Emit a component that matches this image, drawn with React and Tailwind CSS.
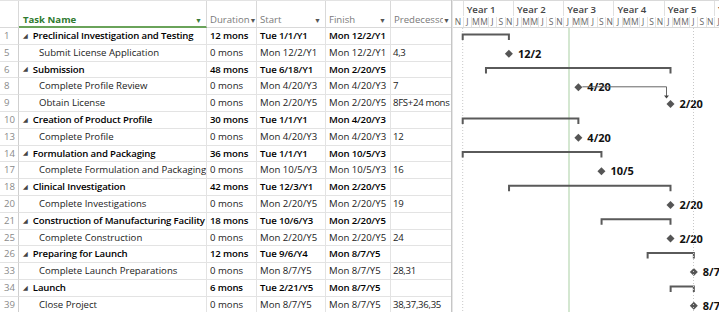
const rows = [
  { id: 1, name: "Preclinical Investigation and Testing", dur: "12 mons", start: "Tue 1/1/Y1", finish: "Mon 12/2/Y1", pred: "", sum: true, from: [1, 1, 1], to: [1, 12, 2] },
  { id: 5, name: "Submit License Application", dur: "0 mons", start: "Mon 12/2/Y1", finish: "Mon 12/2/Y1", pred: "4,3", at: [1, 12, 2], label: "12/2" },
  { id: 6, name: "Submission", dur: "48 mons", start: "Tue 6/18/Y1", finish: "Mon 2/20/Y5", pred: "", sum: true, from: [1, 6, 18], to: [5, 2, 20] },
  { id: 8, name: "Complete Profile Review", dur: "0 mons", start: "Mon 4/20/Y3", finish: "Mon 4/20/Y3", pred: "7", at: [3, 4, 20], label: "4/20" },
  { id: 9, name: "Obtain License", dur: "0 mons", start: "Mon 2/20/Y5", finish: "Mon 2/20/Y5", pred: "8FS+24 mons", at: [5, 2, 20], label: "2/20" },
  { id: 10, name: "Creation of Product Profile", dur: "30 mons", start: "Tue 1/1/Y1", finish: "Mon 4/20/Y3", pred: "", sum: true, from: [1, 1, 1], to: [3, 4, 20] },
  { id: 13, name: "Complete Profile", dur: "0 mons", start: "Mon 4/20/Y3", finish: "Mon 4/20/Y3", pred: "12", at: [3, 4, 20], label: "4/20" },
  { id: 14, name: "Formulation and Packaging", dur: "36 mons", start: "Tue 1/1/Y1", finish: "Mon 10/5/Y3", pred: "", sum: true, from: [1, 1, 1], to: [3, 10, 5] },
  { id: 17, name: "Complete Formulation and Packaging", dur: "0 mons", start: "Mon 10/5/Y3", finish: "Mon 10/5/Y3", pred: "16", at: [3, 10, 5], label: "10/5" },
  { id: 18, name: "Clinical Investigation", dur: "42 mons", start: "Tue 12/3/Y1", finish: "Mon 2/20/Y5", pred: "", sum: true, from: [1, 12, 3], to: [5, 2, 20] },
  { id: 20, name: "Complete Investigations", dur: "0 mons", start: "Mon 2/20/Y5", finish: "Mon 2/20/Y5", pred: "19", at: [5, 2, 20], label: "2/20" },
  { id: 21, name: "Construction of Manufacturing Facility", dur: "18 mons", start: "Tue 10/6/Y3", finish: "Mon 2/20/Y5", pred: "", sum: true, from: [3, 10, 6], to: [5, 2, 20] },
  { id: 25, name: "Complete Construction", dur: "0 mons", start: "Mon 2/20/Y5", finish: "Mon 2/20/Y5", pred: "24", at: [5, 2, 20], label: "2/20" },
  { id: 26, name: "Preparing for Launch", dur: "12 mons", start: "Tue 9/6/Y4", finish: "Mon 8/7/Y5", pred: "", sum: true, from: [4, 9, 6], to: [5, 8, 7] },
  { id: 33, name: "Complete Launch Preparations", dur: "0 mons", start: "Mon 8/7/Y5", finish: "Mon 8/7/Y5", pred: "28,31", at: [5, 8, 7], label: "8/7" },
  { id: 34, name: "Launch", dur: "6 mons", start: "Tue 2/21/Y5", finish: "Mon 8/7/Y5", pred: "", sum: true, from: [5, 2, 21], to: [5, 8, 7] },
  { id: 39, name: "Close Project", dur: "0 mons", start: "Mon 8/7/Y5", finish: "Mon 8/7/Y5", pred: "38,37,36,35", at: [5, 8, 7], label: "8/7" },
];

const RH = 16.8;
const X0 = 9.7;
const YW = 50.25;
const px = ([y, m, d]) => X0 + (y - 1) * YW + (m - 1 + (d - 1) / 30.5) * (YW / 12);

const months = ["J", "M", "M", "J", "S", "N"];

function Arrow({ green }) {
  return <span className={`shrink-0 text-[7px] leading-none ${green ? "text-[#3b7d3b]" : "text-[#555]"}`}>▼</span>;
}

function Table() {
  const cell = "h-[16.8px] flex items-center border-r border-b border-[#e3e3e3] whitespace-nowrap overflow-hidden";
  const bold = "font-semibold tracking-[-0.15px] text-black";
  return (
    <div className="w-[451px] shrink-0 overflow-hidden">
      <div className="grid grid-cols-[19px_188px_50px_69px_65px_60px] h-[28px] border-t border-[#e3e3e3] text-[#7a7a7a]">
        <div className="border-r border-b border-[#d9d9d9]" />
        <div className="flex items-end justify-between pl-[4px] pr-[4px] pb-[1px] border-r border-[#d9d9d9] border-b-2 border-b-[#6aa35a] font-bold text-[#2f7a2f]">
          <span>Task Name</span>
          <span><Arrow green /></span>
        </div>
        <div className="flex items-end justify-between pl-[3px] pr-[2px] pb-[2px] border-r border-b border-[#d9d9d9]">
          <span>Duration</span>
          <span><Arrow /></span>
        </div>
        <div className="flex items-end justify-between pl-[3px] pr-[4px] pb-[2px] border-r border-b border-[#d9d9d9]">
          <span>Start</span>
          <span><Arrow /></span>
        </div>
        <div className="flex items-end justify-between pl-[3px] pr-[4px] pb-[2px] border-r border-b border-[#d9d9d9]">
          <span>Finish</span>
          <span><Arrow /></span>
        </div>
        <div className="flex items-end justify-between pl-[3px] pr-[1px] pb-[2px] border-b border-[#d9d9d9] whitespace-nowrap overflow-hidden">
          <span className="min-w-0 overflow-hidden">Predecessor:</span>
          <span><Arrow /></span>
        </div>
      </div>
      <div className="grid grid-cols-[19px_188px_50px_69px_65px_60px] text-[#222]">
        {rows.map((r) => (
          <div key={r.id} className="contents">
            <div className={`${cell} pl-[4px] text-[#8a8a8a] border-r-[#cfcfcf]`}>{r.id}</div>
            <div className={`${cell} ${r.sum ? `pl-[4px] ${bold}` : "pl-[20px]"}`}>
              {r.sum && <span className="text-[6px] text-[#444] mr-[5px]">◢</span>}
              {r.name}
            </div>
            <div className={`${cell} pl-[3px] ${r.sum ? bold : ""}`}>{r.dur}</div>
            <div className={`${cell} pl-[3px] ${r.sum ? bold : ""}`}>{r.start}</div>
            <div className={`${cell} pl-[3px] ${r.sum ? bold : ""}`}>{r.finish}</div>
            <div className={`${cell} pl-[2px] border-r-0 tracking-[-0.3px]`}>{r.pred}</div>
          </div>
        ))}
      </div>
    </div>
  );
}

function Timescale() {
  return (
    <div className="h-[28px] border-t border-b border-[#d9d9d9] text-[#555] overflow-hidden">
      <div className="flex h-[15px] items-center font-semibold text-[#444]">
        <div className="w-[9.7px] shrink-0 h-full" />
        {[1, 2, 3, 4, 5, 6].map((y) => (
          <div key={y} className="w-[50.25px] shrink-0 h-full flex items-center pt-[2px] pl-[3px] border-l border-[#e0e0e0] whitespace-nowrap">
            Year {y}
          </div>
        ))}
      </div>
      <div className="flex h-[11px] items-center pt-[1px] text-[8.5px] text-[#666]">
        <div className="w-[9.7px] shrink-0 h-full flex items-center justify-center">N</div>
        {[1, 2, 3, 4, 5, 6].map((y) =>
          months.map((m, i) => (
            <div key={`${y}-${i}`} className="w-[8.375px] shrink-0 h-full flex items-center justify-center border-l border-[#e3e3e3]">
              {m}
            </div>
          ))
        )}
      </div>
    </div>
  );
}

function Chart() {
  const h = rows.length * RH;
  const c8 = 3 * RH + RH / 2;
  const c9 = 4 * RH + RH / 2;
  const x8 = px([3, 4, 20]);
  return (
    <svg width="266" height={h} className="block">
      <line x1={X0} y1="0" x2={X0} y2={h} stroke="#c8c8c8" strokeDasharray="1 2" />
      <line x1="116" y1="0" x2="116" y2={h} stroke="#a9cfa3" />
      {rows.map((r, i) => {
        const top = i * RH;
        if (r.sum) {
          const a = px(r.from);
          const b = px(r.to);
          return (
            <g key={r.id} fill="none" stroke="#5a5a5a" strokeWidth="2">
              <path d={`M${a} ${top + 12} V${top + 6.5} H${b} V${top + 12}`} />
            </g>
          );
        }
        const x = px(r.at);
        const cy = top + RH / 2 + 0.5;
        return (
          <g key={r.id}>
            <path d={`M${x} ${cy - 4} L${x + 4} ${cy} L${x} ${cy + 4} L${x - 4} ${cy} Z`} fill="#555" />
            <text x={x + 9} y={cy + 4} fontSize="11" fontWeight="700" fill="#111" fontFamily="Open Sans, sans-serif">
              {r.label}
            </text>
          </g>
        );
      })}
      <path d={`M${x8 + 4} ${c8} H${213.5} V${c9 - 7}`} fill="none" stroke="#666" strokeWidth="1" />
      <path d={`M${211} ${c9 - 8} L${216} ${c9 - 8} L${213.5} ${c9 - 5} Z`} fill="#444" />
      <line x1="240.5" y1="0" x2="240.5" y2={h} stroke="#c8c8c8" strokeDasharray="1 2" />
    </svg>
  );
}

export default function App() {
  return (
    <div className="w-[719px] h-[312px] overflow-hidden bg-white flex font-['Open_Sans',sans-serif] text-[9.6px] leading-none">
      <Table />
      <div className="w-[2px] shrink-0 border-l border-[#c6c6c6] border-r border-r-[#e6e6e6]" />
      <div className="flex-1 overflow-hidden">
        <Timescale />
        <Chart />
      </div>
    </div>
  );
}
